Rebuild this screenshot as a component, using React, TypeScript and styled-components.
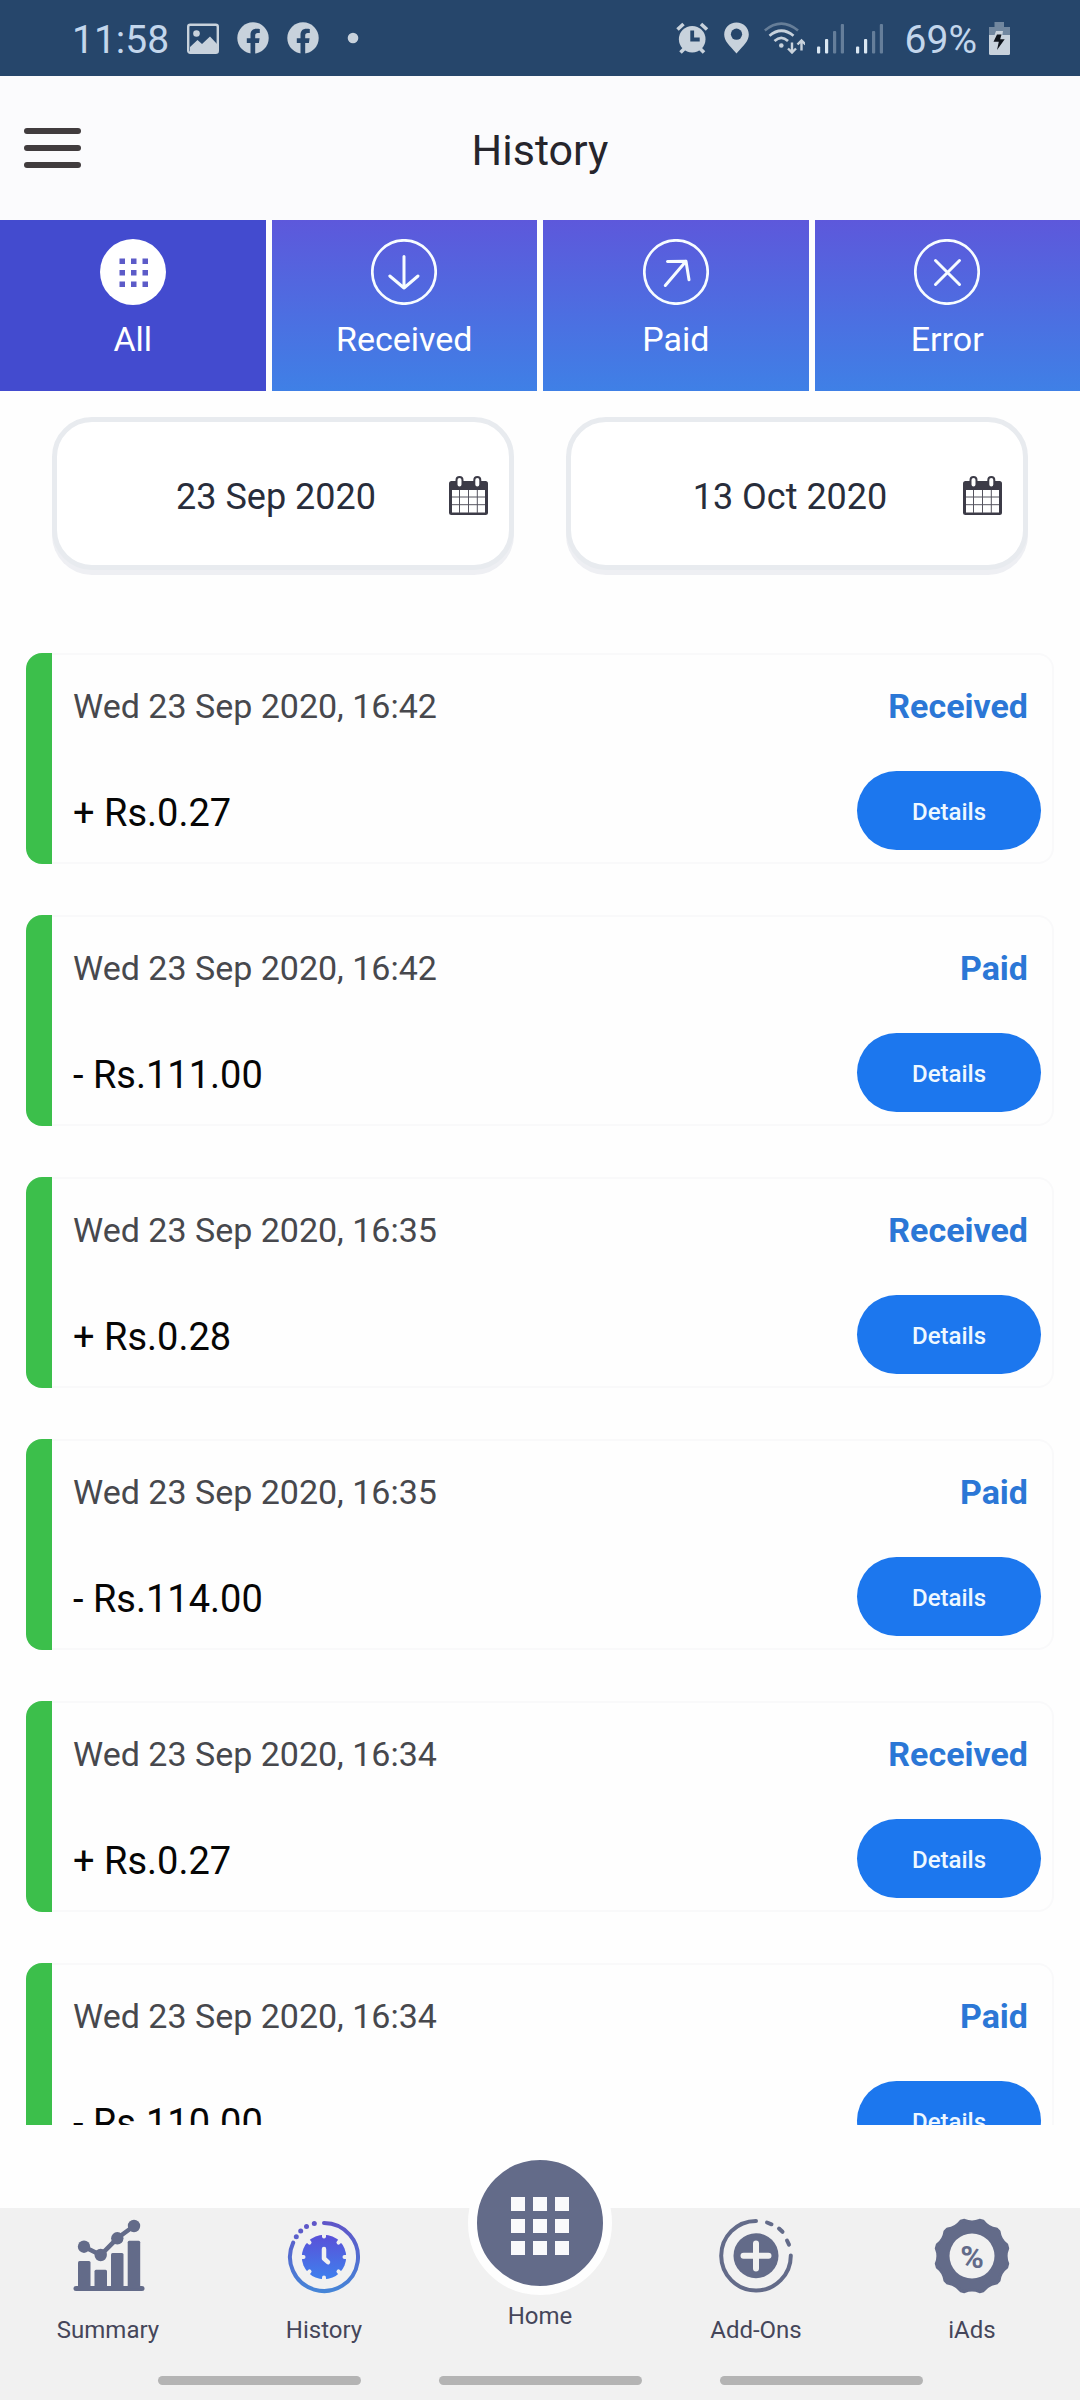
import React from "react";
import styled, { createGlobalStyle } from "styled-components";

const color = {
  statusBar: "#26466b",
  statusInk: "#c8d2dc",
  statusText: "#c3d6ec",
  header: "#fbfbfd",
  active: "#434bcf",
  gradientTop: "#5d58db",
  gradientBottom: "#3f80e6",
  primary: "#1c77ee",
  status: "#2b77d6",
  green: "#3cbf4b",
  slate: "#636b89",
  bar: "#f1f1f1",
};

const GlobalStyle = createGlobalStyle`
  * { box-sizing: border-box; }
  body {
    margin: 0;
    background: #fefefe;
    font-family: Roboto, "Liberation Sans", sans-serif;
  }
  button, input { font-family: inherit; margin: 0; }
  svg { display: block; flex: none; }
`;

const Screen = styled.div`
  display: flex;
  flex-direction: column;
  height: 100vh;
  overflow: hidden;
`;

const StatusBar = styled.div`
  display: flex;
  align-items: center;
  justify-content: space-between;
  flex: none;
  height: 76px;
  padding: 0 70px 0 72px;
  background: ${color.statusBar};
  color: ${color.statusText};
`;

const StatusGroup = styled.div<{ $gap: number }>`
  display: flex;
  align-items: center;
  gap: ${(p) => p.$gap}px;
`;

const StatusText = styled.span`
  padding-top: 4px;
  font-size: 39px;
  line-height: 48px;
`;

const Percent = styled(StatusText)`
  margin-left: 10px;
`;

const Header = styled.header`
  display: grid;
  grid-template-columns: 1fr auto 1fr;
  align-items: center;
  flex: none;
  height: 144px;
  padding: 0 24px;
  background: ${color.header};
`;

const MenuButton = styled.button`
  display: grid;
  justify-self: start;
  gap: 11px;
  width: 57px;
  padding: 0;
  border: 0;
  background: none;
`;

const MenuLine = styled.span`
  height: 6px;
  border-radius: 3px;
  background: #413c3e;
`;

const Title = styled.h1`
  margin: 0;
  padding-top: 4px;
  color: #26252c;
  font-size: 43px;
  font-weight: 400;
  line-height: 52px;
`;

const Tabs = styled.nav`
  display: grid;
  grid-template-columns: repeat(4, 1fr);
  gap: 6px;
  flex: none;
`;

const Tab = styled.button<{ $active?: boolean }>`
  display: flex;
  flex-direction: column;
  align-items: center;
  gap: 14px;
  padding: 19px 0 32px;
  border: 0;
  background: ${(p) =>
    p.$active
      ? color.active
      : `linear-gradient(${color.gradientTop}, ${color.gradientBottom})`};
  color: #fff;
  font-size: 34px;
  line-height: 40px;
`;

const Dates = styled.form`
  display: grid;
  grid-template-columns: repeat(2, minmax(0, 1fr));
  gap: 52px;
  flex: none;
  padding: 26px 52px 0;
`;

const DateField = styled.label`
  display: flex;
  align-items: center;
  height: 153px;
  padding: 4px 21px 0 46px;
  border: 5px solid #e8ebef;
  border-radius: 40px;
  background: #fff;
  box-shadow: 0 5px 0 #eeeff3;
`;

const DateInput = styled.input`
  flex: 1;
  min-width: 0;
  padding: 3px 0 0;
  border: 0;
  outline: 0;
  background: none;
  color: #282d3b;
  font-size: 36px;
  line-height: 42px;
  text-align: center;
`;

const List = styled.ul`
  display: flex;
  flex-direction: column;
  gap: 51px;
  flex: 1;
  min-height: 0;
  margin: 83px 0;
  padding: 0 26px;
  overflow: hidden;
  list-style: none;
`;

const Card = styled.li`
  display: flex;
  flex: none;

  &::before {
    content: "";
    width: 26px;
    border-radius: 16px 0 0 16px;
    background: ${color.green};
  }
`;

const CardBody = styled.div`
  flex: 1;
  padding: 31px 11px 12px 21px;
  border: 2px solid #f9f9fa;
  border-left: 0;
  border-radius: 0 16px 16px 0;
`;

const CardTop = styled.div`
  display: flex;
  justify-content: space-between;
  padding-right: 13px;
  font-size: 34px;
  line-height: 40px;
`;

const Time = styled.time`
  color: #47484d;
`;

const Kind = styled.strong`
  color: ${color.status};
  font-weight: 700;
`;

const CardBottom = styled.div`
  display: flex;
  align-items: center;
  justify-content: space-between;
  margin-top: 45px;
`;

const Amount = styled.span`
  padding-top: 4px;
  color: #060606;
  font-size: 38px;
  line-height: 44px;
`;

const DetailsButton = styled.button`
  width: 184px;
  height: 79px;
  padding: 2px 0 0;
  border: 0;
  border-radius: 40px;
  background: ${color.primary};
  color: #eef8ff;
  font-size: 24px;
  font-weight: 500;
  line-height: 28px;
`;

const Footer = styled.footer`
  display: flex;
  flex-direction: column;
  justify-content: space-between;
  flex: none;
  height: 192px;
  padding-bottom: 15px;
  background: ${color.bar};
`;

const Nav = styled.nav`
  display: grid;
  grid-template-columns: repeat(5, 1fr);
  align-items: start;
`;

const NavLink = styled.a<{ $raised?: boolean }>`
  display: flex;
  flex-direction: column;
  align-items: center;
  gap: ${(p) => (p.$raised ? 7 : 22)}px;
  margin-top: ${(p) => (p.$raised ? -57 : 10)}px;
  color: #45465a;
  font-size: 24px;
  line-height: 28px;
  text-decoration: none;
`;

const HomeCircle = styled.span`
  display: grid;
  place-items: center;
  width: 144px;
  height: 144px;
  border: 9px solid #fefefe;
  border-radius: 50%;
  background: ${color.slate};
`;

const HomeGrid = styled.span`
  display: grid;
  grid-template-columns: repeat(3, 14px);
  gap: 8px;
  padding-top: 6px;
`;

const HomeDot = styled.span`
  height: 14px;
  background: #f9f9fb;
`;

const Handles = styled.div`
  display: flex;
  justify-content: center;
  gap: 78px;
`;

const Handle = styled.span`
  width: 203px;
  height: 9px;
  border-radius: 5px;
  background: #b4b4b4;
`;

const ink = color.statusInk;

const PictureIcon = () => (
  <svg width="32" height="31" viewBox="0 0 32 31">
    <rect x="1.2" y="1.7" width="29.6" height="28" rx="2" fill="none" stroke={ink} strokeWidth="2.4" />
    <circle cx="9.5" cy="10.5" r="3.3" fill={ink} />
    <path d="M3 24l7.5-7 4.5 4 8-7.500 7 7.500V30H3z" fill={ink} />
  </svg>
);

const FacebookIcon = () => (
  <svg width="32" height="32" viewBox="0 0 32 32">
    <circle cx="16" cy="16" r="15.700" fill={ink} />
    <path
      d="M13.500 32.500V21H9.800v-4.800h3.700v-3.400c0-4 2.300-6.100 6-6.100 1.400 0 2.800.2 3.300.3v4h-2c-1.900 0-2.600 1.100-2.600 2.400v2.800h4.400l-.7 4.800h-3.700v11.500z"
      fill={color.statusBar}
    />
  </svg>
);

const DotIcon = () => (
  <svg width="32" height="32" viewBox="0 0 32 32">
    <circle cx="16" cy="16" r="5.300" fill={ink} />
  </svg>
);

const AlarmIcon = () => (
  <svg width="36" height="32" viewBox="0 0 36 32">
    <g stroke={ink} strokeWidth="3.600">
      <path d="M1.500 7.500L7.500 2M31 7.500L25 2M4.500 30.500L9 26M28 30.500L23.500 26" />
    </g>
    <circle cx="16.200" cy="17.200" r="13.300" fill={ink} />
    <path d="M16.200 8.500v9h7.500" fill="none" stroke={color.statusBar} strokeWidth="3.800" />
  </svg>
);

const PinIcon = () => (
  <svg width="28" height="32" viewBox="0 0 28 32">
    <path d="M12.500 0.500C5.500.5.200 5.800.2 12.500c0 6.500 4.800 10.500 12.300 19 7.500-8.500 12.300-12.500 12.300-19C24.800 5.800 19.500.5 12.500.5z" fill={ink} />
    <circle cx="12.500" cy="12.200" r="5.600" fill={color.statusBar} />
  </svg>
);

const WifiIcon = () => (
  <svg width="41" height="32" viewBox="0 0 41 32" fill="none" stroke={ink} strokeWidth="2.700">
    <path d="M.8 8.500Q17.300-5.200 34 8.500" opacity=".4" />
    <path d="M5.500 13.700Q17.300 3.800 29.500 13.700" />
    <path d="M10.500 19Q17.300 12.800 24 19" />
    <circle cx="17.300" cy="23.500" r="2.300" fill={ink} stroke="none" />
    <path d="M28 20.500v10M24 26.500l4 4 4-4M37.500 28.500v-10M33.500 22.500l4-4 4 4" strokeWidth="2.400" />
  </svg>
);

const SignalIcon = () => (
  <svg width="27" height="32" viewBox="0 0 27 32" fill="#dbe8f3">
    <rect x="0" y="24.500" width="3.200" height="7" rx="1" />
    <rect x="8" y="17" width="3.200" height="14.500" rx="1" />
    <g opacity=".35">
      <rect x="16" y="9" width="3.200" height="22.500" rx="1" />
      <rect x="23.800" y="2" width="3.200" height="29.500" rx="1" />
    </g>
  </svg>
);

const BatteryIcon = () => (
  <svg width="21" height="33" viewBox="0 0 21 33">
    <path d="M5.500 0h9.500v5h6v8H0V5h5.500z" fill="#71879f" />
    <path d="M0 13h21v18.500q0 1.500-1.500 1.500h-18Q0 33 0 31.500z" fill={ink} />
    <path d="M7 9h7l-1 6h5L8.500 30l1.800-10H3z" fill={ink} />
    <path d="M8 12.500h4.500l-1.300 4.800h4.500L8 28l1.800-8.200H4.500z" fill="#10151c" />
  </svg>
);

const tabCells = [19.5, 31, 42.500];

const AllIcon = () => (
  <svg width="66" height="66" viewBox="0 0 66 66">
    <circle cx="33" cy="33" r="33" fill="#fff" />
    {tabCells.map((y) =>
      tabCells.map((x) => (
        <rect key={`${x}-${y}`} x={x} y={y} width="5.500" height="5.500" fill="#5c5bc8" />
      ))
    )}
  </svg>
);

const OutlineIcon = ({ d }: { d: string }) => (
  <svg
    width="66"
    height="66"
    viewBox="0 0 66 66"
    fill="none"
    stroke="#f7fcff"
    strokeLinecap="round"
    strokeLinejoin="round"
  >
    <circle cx="33" cy="33" r="31.700" strokeWidth="2.700" />
    <path d={d} strokeWidth="3" />
  </svg>
);

const CalendarIcon = () => (
  <svg width="39" height="39" viewBox="0 0 39 39">
    <rect y="5" width="39" height="34" rx="2.500" fill="#3c3b47" />
    <path d="M3 14h33v22.500H3z" fill="#fff" />
    <path d="M10.500 14v23M19.500 14v23M28.300 14v23M3 21h33M3 28.700h33" stroke="#55545f" strokeWidth="1" />
    {[10.500, 28.300].map((x) => (
      <rect key={x} x={x - 3} y="1" width="6" height="10.500" rx="3" fill="#fff" stroke="#3c3b47" strokeWidth="2" />
    ))}
  </svg>
);

const SummaryIcon = () => (
  <svg width="76" height="76" viewBox="0 0 76 76" fill={color.slate}>
    <rect x="3.500" y="68" width="71" height="5" rx="2.500" />
    <rect x="8" y="43" width="12.500" height="28" rx="1.500" />
    <rect x="24.500" y="51.700" width="12.500" height="19" rx="1.500" />
    <rect x="41" y="35" width="12.500" height="36" rx="1.500" />
    <rect x="57.700" y="22.700" width="12.500" height="48" rx="1.500" />
    <path d="M14 28.700l16.700 8.300 16.600-16.700L64 8" fill="none" stroke={color.slate} strokeWidth="4.500" />
    <circle cx="14" cy="28.700" r="6.200" />
    <circle cx="30.700" cy="37" r="6.200" />
    <circle cx="47.300" cy="20.300" r="6.200" />
    <circle cx="64" cy="8" r="6.200" />
  </svg>
);

const HistoryIcon = () => (
  <svg width="76" height="76" viewBox="0 0 76 76">
    <defs>
      <linearGradient id="ring" gradientUnits="userSpaceOnUse" x1="0" y1="3" x2="0" y2="75">
        <stop offset="0" stopColor="#6054c8" />
        <stop offset="1" stopColor="#4586d8" />
      </linearGradient>
      <linearGradient id="clock" gradientUnits="userSpaceOnUse" x1="0" y1="17" x2="0" y2="61">
        <stop offset="0" stopColor="#5a50d8" />
        <stop offset="1" stopColor="#3f80ee" />
      </linearGradient>
    </defs>
    <path d="M38 5A34 34 0 1 1 7.200 24.600" fill="none" stroke="url(#ring)" strokeWidth="4" strokeLinecap="round" />
    <g fill="url(#ring)">
      <circle cx="10.300" cy="18.700" r="2.500" />
      <circle cx="14.700" cy="13" r="2.500" />
      <circle cx="20.500" cy="8.500" r="2.500" />
      <circle cx="28.300" cy="5.500" r="2.500" />
    </g>
    <circle cx="38" cy="39" r="22.200" fill="url(#clock)" />
    <g stroke={color.bar} strokeWidth="4" strokeLinecap="round">
      {[0, 45, 90, 135, 180, 225, 270, 315].map((a) => (
        <path key={a} d="M38 15v3.500" transform={`rotate(${a} 38 39)`} />
      ))}
    </g>
    <path d="M38 31v9.500l4 3.700" fill="none" stroke={color.bar} strokeWidth="4.500" strokeLinecap="round" strokeLinejoin="round" />
  </svg>
);

const AddOnsIcon = () => (
  <svg width="76" height="76" viewBox="0 0 76 76" fill="none" strokeLinecap="round">
    <g stroke={color.slate} strokeWidth="4">
      <path d="M72.800 37.500A34.800 34.800 0 1 1 38 2.900" />
      <path d="M49 4.500l4.500 1.800M61 10.500l3.500 3.300M69 22.500l2 4.200" />
    </g>
    <circle cx="38" cy="37.700" r="22.500" fill={color.slate} />
    <path d="M38 25.500v25M25.500 37.700h25" stroke={color.bar} strokeWidth="6" />
  </svg>
);

const polar = (r: number, deg: number) => {
  const a = (deg * Math.PI) / 180;
  return `${(38 + r * Math.sin(a)).toFixed(1)} ${(38 - r * Math.cos(a)).toFixed(1)}`;
};

const badgePath =
  `M${polar(36.5, -12)}` +
  Array.from({ length: 12 }, (_, i) => {
    const mid = i * 30;
    return `Q${polar(32.5, mid)} ${polar(36.5, mid + 12)}L${polar(36.5, mid + 18)}`;
  }).join("") +
  "Z";

const AdsIcon = () => (
  <svg width="76" height="76" viewBox="0 0 76 76">
    <path d={badgePath} fill={color.slate} stroke={color.slate} strokeWidth="3" strokeLinejoin="round" />
    <circle cx="38" cy="38" r="22.500" fill={color.bar} />
    <text x="38" y="50" textAnchor="middle" fontSize="32" fontWeight="700" fill={color.slate}>
      %
    </text>
  </svg>
);

const tabs = [
  { label: "All", icon: <AllIcon />, active: true },
  { label: "Received", icon: <OutlineIcon d="M33 17.500V49M18.800 37L33 49l14-12" /> },
  { label: "Paid", icon: <OutlineIcon d="M22.300 46.500L43 22.300M24.500 22.500L43 22.300l3 18.500" /> },
  { label: "Error", icon: <OutlineIcon d="M21.500 21.500l24 24M45.500 21.500l-24 24" /> },
];

const transactions = [
  { time: "16:42", kind: "Received", amount: "+ Rs.0.27" },
  { time: "16:42", kind: "Paid", amount: "- Rs.111.00" },
  { time: "16:35", kind: "Received", amount: "+ Rs.0.28" },
  { time: "16:35", kind: "Paid", amount: "- Rs.114.00" },
  { time: "16:34", kind: "Received", amount: "+ Rs.0.27" },
  { time: "16:34", kind: "Paid", amount: "- Rs.110.00" },
];

const DatePicker = ({ label, value }: { label: string; value: string }) => (
  <DateField>
    <DateInput type="text" aria-label={label} defaultValue={value} readOnly />
    <CalendarIcon />
  </DateField>
);

export default function App() {
  return (
    <>
      <GlobalStyle />
      <Screen>
        <StatusBar>
          <StatusGroup $gap={18}>
            <StatusText>11:58</StatusText>
            <PictureIcon />
            <FacebookIcon />
            <FacebookIcon />
            <DotIcon />
          </StatusGroup>
          <StatusGroup $gap={12}>
            <AlarmIcon />
            <PinIcon />
            <WifiIcon />
            <SignalIcon />
            <SignalIcon />
            <Percent>69%</Percent>
            <BatteryIcon />
          </StatusGroup>
        </StatusBar>

        <Header>
          <MenuButton aria-label="Menu">
            <MenuLine />
            <MenuLine />
            <MenuLine />
          </MenuButton>
          <Title>History</Title>
        </Header>

        <Tabs>
          {tabs.map((tab) => (
            <Tab key={tab.label} $active={tab.active} aria-pressed={!!tab.active}>
              {tab.icon}
              {tab.label}
            </Tab>
          ))}
        </Tabs>

        <Dates>
          <DatePicker label="From" value="23 Sep 2020" />
          <DatePicker label="To" value="13 Oct 2020" />
        </Dates>

        <List>
          {transactions.map((item, index) => (
            <Card key={index}>
              <CardBody>
                <CardTop>
                  <Time dateTime={`2020-09-23T${item.time}`}>Wed 23 Sep 2020, {item.time}</Time>
                  <Kind>{item.kind}</Kind>
                </CardTop>
                <CardBottom>
                  <Amount>{item.amount}</Amount>
                  <DetailsButton>Details</DetailsButton>
                </CardBottom>
              </CardBody>
            </Card>
          ))}
        </List>

        <Footer>
          <Nav>
            <NavLink href="#summary">
              <SummaryIcon />
              Summary
            </NavLink>
            <NavLink href="#history">
              <HistoryIcon />
              History
            </NavLink>
            <NavLink href="#home" $raised>
              <HomeCircle>
                <HomeGrid>
                  {Array.from({ length: 9 }, (_, i) => (
                    <HomeDot key={i} />
                  ))}
                </HomeGrid>
              </HomeCircle>
              Home
            </NavLink>
            <NavLink href="#add-ons">
              <AddOnsIcon />
              Add-Ons
            </NavLink>
            <NavLink href="#iads">
              <AdsIcon />
              iAds
            </NavLink>
          </Nav>
          <Handles>
            <Handle />
            <Handle />
            <Handle />
          </Handles>
        </Footer>
      </Screen>
    </>
  );
}
